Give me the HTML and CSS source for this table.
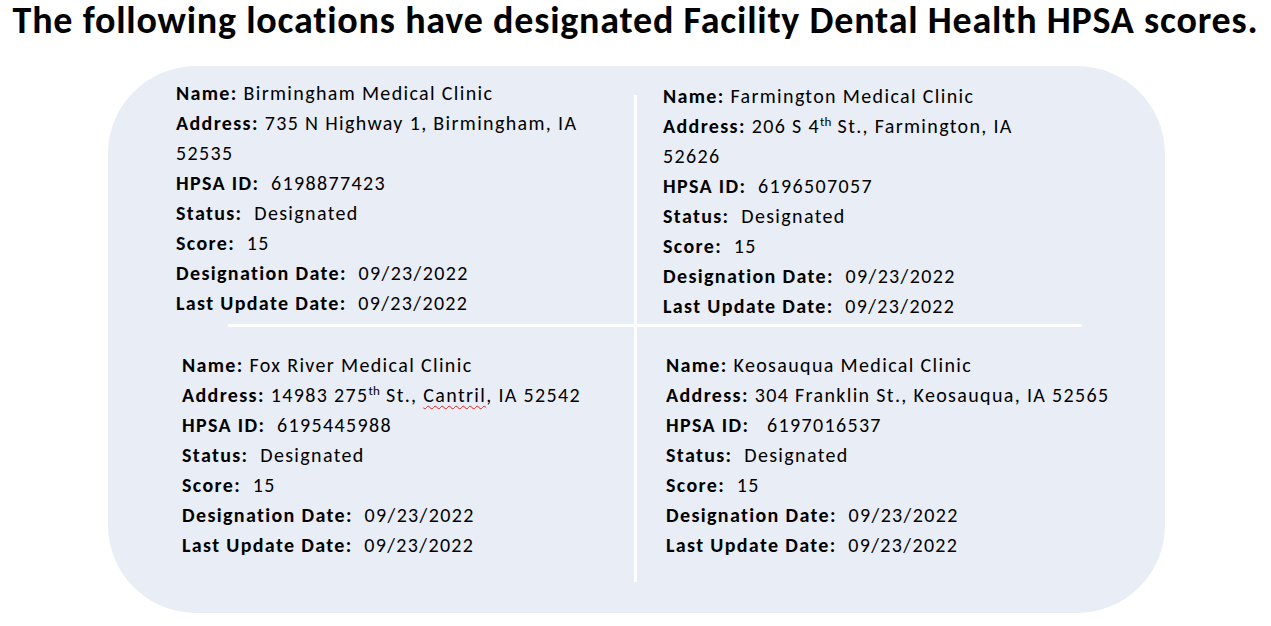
FILE: index.html
```html
<!DOCTYPE html>
<html lang="en">
<head>
<meta charset="utf-8">
<title>Facility Dental Health HPSA scores</title>
<link rel="stylesheet" href="styles.css">
</head>
<body>
<h1 class="title">The following locations have designated Facility Dental Health HPSA scores.</h1>
<section class="panel">
  <div class="card c1">
    <p><b>Name:</b> Birmingham Medical Clinic</p>
    <p><b>Address:</b> 735 N Highway 1, Birmingham, IA<br>52535</p>
    <p><b>HPSA ID:</b>&nbsp; 6198877423</p>
    <p><b>Status:</b>&nbsp; Designated</p>
    <p><b>Score:</b>&nbsp; 15</p>
    <p><b>Designation Date:</b>&nbsp; 09/23/2022</p>
    <p><b>Last Update Date:</b>&nbsp; 09/23/2022</p>
  </div>
  <div class="vline"></div>
  <div class="card c2">
    <p><b>Name:</b> Farmington Medical Clinic</p>
    <p><b>Address:</b> 206 S 4<sup>th</sup> St., Farmington, IA<br>52626</p>
    <p><b>HPSA ID:</b>&nbsp; 6196507057</p>
    <p><b>Status:</b>&nbsp; Designated</p>
    <p><b>Score:</b>&nbsp; 15</p>
    <p><b>Designation Date:</b>&nbsp; 09/23/2022</p>
    <p><b>Last Update Date:</b>&nbsp; 09/23/2022</p>
  </div>
  <div class="hline"></div>
  <div class="card c3">
    <p><b>Name:</b> Fox River Medical Clinic</p>
    <p><b>Address:</b> 14983 275<sup>th</sup> St., <span class="spell">Cantril</span>, IA 52542</p>
    <p><b>HPSA ID:</b>&nbsp; 6195445988</p>
    <p><b>Status:</b>&nbsp; Designated</p>
    <p><b>Score:</b>&nbsp; 15</p>
    <p><b>Designation Date:</b>&nbsp; 09/23/2022</p>
    <p><b>Last Update Date:</b>&nbsp; 09/23/2022</p>
  </div>
  <div class="card c4">
    <p><b>Name:</b> Keosauqua Medical Clinic</p>
    <p><b>Address:</b> 304 Franklin St., Keosauqua, IA 52565</p>
    <p><b>HPSA ID:</b>&nbsp;&nbsp; 6197016537</p>
    <p><b>Status:</b>&nbsp; Designated</p>
    <p><b>Score:</b>&nbsp; 15</p>
    <p><b>Designation Date:</b>&nbsp; 09/23/2022</p>
    <p><b>Last Update Date:</b>&nbsp; 09/23/2022</p>
  </div>
</section>
</body>
</html>
```
FILE: styles.css
```css
html, body {
  margin: 0;
  padding: 0;
  background: #ffffff;
}

body {
  font-family: "Carlito", "Lato", "Liberation Sans", sans-serif;
  color: #000000;
  width: 1271px;
  height: 626px;
  overflow: hidden;
}

.title {
  margin: 0;
  height: 66px;
  font-size: 38px;
  line-height: 40px;
  font-weight: 700;
  text-align: center;
  letter-spacing: 0.8px;
  white-space: nowrap;
}

.panel {
  margin-left: 108px;
  width: 1057px;
  height: 547px;
  background: #e9edf6;
  border-radius: 88px;
  display: grid;
  grid-template-columns: 526px 3px 528px;
  grid-template-rows: 258px 3px 286px;
}

.vline {
  grid-column: 2;
  grid-row: 1 / 4;
  background: #ffffff;
  margin: 29px 0 31px 0;
}

.hline {
  grid-column: 1 / 4;
  grid-row: 2;
  background: #ffffff;
  margin: 0 83px 0 120px;
}

.card {
  font-size: 20px;
  line-height: 30px;
  letter-spacing: 1.35px;
}

.card p {
  margin: 0;
}

.card b {
  font-weight: 700;
}

.card sup {
  font-size: 13px;
  letter-spacing: 0.3px;
  line-height: 0;
  vertical-align: 7px;
}

.c1 {
  grid-column: 1;
  grid-row: 1;
  padding: 12px 0 0 68px;
}

.c2 {
  grid-column: 3;
  grid-row: 1;
  padding: 15px 0 0 26px;
}

.c3 {
  grid-column: 1;
  grid-row: 3;
  padding: 23px 0 0 74px;
}

.c4 {
  grid-column: 3;
  grid-row: 3;
  padding: 23px 0 0 29px;
}

.spell {
  text-decoration: underline wavy #e02020;
  text-decoration-thickness: 1px;
  text-underline-offset: 3px;
}
```
